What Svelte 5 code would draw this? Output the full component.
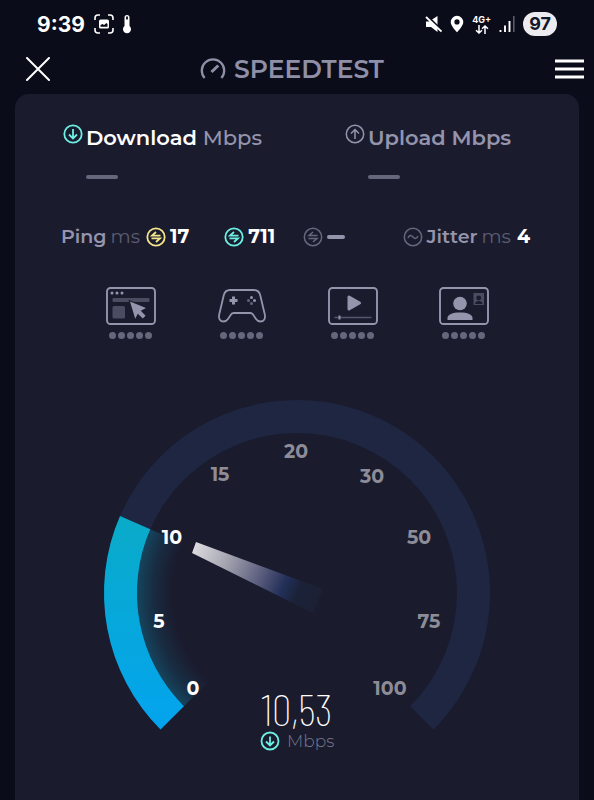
<script>
  const activities = ['Browsing', 'Gaming', 'Streaming', 'Video chat'];

  // offsets from the dial centre
  const marks = [
    { value: 0, x: -104, y: 95 },
    { value: 5, x: -138, y: 28 },
    { value: 10, x: -125, y: -56 },
    { value: 15, x: -77, y: -119 },
    { value: 20, x: -1, y: -142 },
    { value: 30, x: 75, y: -117 },
    { value: 50, x: 122, y: -56 },
    { value: 75, x: 132, y: 28 },
    { value: 100, x: 93, y: 95 }
  ];

  const START = 225;
  const END = 495;
  const NEEDLE = 293.5;

  let current = $state(10);

  function point(r, deg) {
    const a = ((deg - 90) * Math.PI) / 180;
    return `${(r * Math.cos(a)).toFixed(2)} ${(r * Math.sin(a)).toFixed(2)}`;
  }

  function band(outer, inner, from, to) {
    const large = to - from > 180 ? 1 : 0;
    return `M${point(outer, from)} A${outer} ${outer} 0 ${large} 1 ${point(outer, to)} L${point(inner, to)} A${inner} ${inner} 0 ${large} 0 ${point(inner, from)} Z`;
  }
</script>

{#snippet pingIcon(kind)}
  <svg class="round {kind}" viewBox="0 0 20 20" aria-hidden="true">
    <circle cx="10" cy="10" r="8.7" />
    <path d="M14.5 8.6H6L10 5M5.5 11.4H14L10 15" />
  </svg>
{/snippet}

<div class="page">
  <div class="status">
    <span class="clock">9:39</span>
    <svg width="20" height="20" viewBox="0 0 20 20" aria-hidden="true">
      <path d="M1 6V4a3 3 0 0 1 3-3h2M14 1h2a3 3 0 0 1 3 3v2M19 14v2a3 3 0 0 1-3 3h-2M6 19H4a3 3 0 0 1-3-3v-2" fill="none" stroke="#fff" stroke-width="1.6" />
      <rect x="5" y="5.5" width="10" height="9" rx="1.6" fill="#fff" />
      <path d="M6.5 12.8V11l2-1 1.6 1 2.4-2 1 1v2.8z" fill="#0a0c1a" />
    </svg>
    <svg width="8" height="20" viewBox="0 0 8 20" aria-hidden="true">
      <path d="M1.5 3.5a2.5 2.5 0 0 1 5 0v8.600a4 4 0 1 1-5 0z" fill="#fff" />
      <path d="M4 2.5v3" stroke="#0a0c1a" stroke-width="1.8" />
    </svg>
    <div class="right">
      <svg width="17" height="18" viewBox="0 0 17 18" aria-hidden="true">
        <path d="M1 6.5h3L12.5 1v16L6 12H1z" fill="#fff" />
        <path d="M1 .5l15.5 15" stroke="#0a0c1a" stroke-width="3" />
        <path d="M1 2l15.5 14.5" stroke="#fff" stroke-width="1.8" />
      </svg>
      <svg width="14" height="18" viewBox="0 0 14 18" aria-hidden="true">
        <path d="M7 .8A6.300 6.300 0 0 0 .7 7.100C.7 11.300 7 17.300 7 17.300s6.300-6 6.300-10.200A6.300 6.300 0 0 0 7 .8zM7 4.300a2.600 2.600 0 1 1 0 5.200 2.600 2.600 0 0 1 0-5.200z" fill="#fff" fill-rule="evenodd" />
      </svg>
      <span class="net">
        4G+
        <svg width="14" height="9" viewBox="0 0 14 9" aria-hidden="true">
          <path d="M4 0v8M1 5.200L4 8l3-2.800M10 9V1M7 3.800L10 1l3 2.800" fill="none" stroke="#fff" stroke-width="1.500" />
        </svg>
      </span>
      <svg width="16" height="16" viewBox="0 0 16 16" aria-hidden="true">
        <path d="M1.500 16v-2M6 16V9.500M10.500 16V5" stroke="#fff" stroke-width="1.900" />
        <path d="M14.800 16V0" stroke="#5b5c68" stroke-width="1.600" />
      </svg>
      <span class="battery">97</span>
    </div>
  </div>

  <header>
    <button class="close" aria-label="Close">
      <svg width="24" height="24" viewBox="0 0 24 24"><path d="M1 1l22 22M23 1L1 23" stroke="#fff" stroke-width="2" stroke-linecap="round" /></svg>
    </button>
    <h1>
      <svg width="26" height="24" viewBox="0 0 26 24" aria-hidden="true">
        <path d="M4.600 21A11.200 11.200 0 1 1 21.400 21" fill="none" stroke="#8f90a8" stroke-width="2.300" />
        <path d="M11.500 15L18.300 8.500" stroke="#8f90a8" stroke-width="3" />
      </svg>
      SPEEDTEST
    </h1>
    <button class="menu" aria-label="Menu">
      <svg width="29" height="20" viewBox="0 0 29 20"><path d="M0 2h29M0 10h29M0 18h29" stroke="#fff" stroke-width="3" /></svg>
    </button>
  </header>

  <main>
    <section class="results">
      <div class="result on">
        <svg class="round teal" viewBox="0 0 20 20" aria-hidden="true"><circle cx="10" cy="10" r="8.700" /><path d="M10 5v9M6 10.500l4 4 4-4" /></svg>
        <div>
          <h2>Download <span>Mbps</span></h2>
          <div class="dash"></div>
        </div>
      </div>
      <div class="result">
        <svg class="round soft" viewBox="0 0 20 20" aria-hidden="true"><circle cx="10" cy="10" r="8.700" /><path d="M10 15V6M6 9.500l4-4 4 4" /></svg>
        <div>
          <h2>Upload <span>Mbps</span></h2>
          <div class="dash"></div>
        </div>
      </div>
    </section>

    <section class="latency">
      <div><b>Ping</b> <span class="ms">ms</span> {@render pingIcon('yellow')} <strong>17</strong></div>
      <div>{@render pingIcon('teal')} <strong>711</strong></div>
      <div>{@render pingIcon('dim')} <i class="dash"></i></div>
      <div>
        <svg class="round dim" viewBox="0 0 20 20" aria-hidden="true"><circle cx="10" cy="10" r="8.700" /><path d="M5 11c1.500-3.200 3.200-3 5-1s3.500 2.200 5-1" /></svg>
        <b>Jitter</b> <span class="ms">ms</span> <strong class="last">4</strong>
      </div>
    </section>

    <section class="activities">
      {#each activities as name, i}
        <div class="activity">
          <svg width="50" height="38" viewBox="0 0 50 38" role="img" aria-label={name}>
            {#if i !== 1}
              <rect x="1" y="1" width="48" height="36" rx="3.500" fill="none" stroke="#9495ad" stroke-width="1.900" />
            {/if}
            {#if i === 0}
              <g fill="#9495ad"><circle cx="6" cy="6" r="1.500" /><circle cx="11" cy="6" r="1.500" /><circle cx="16" cy="6" r="1.500" /></g>
              <rect x="6.500" y="11" width="37" height="4" rx="1" fill="#4b4c62" />
              <rect x="6.500" y="19" width="12.500" height="12.500" rx="1.500" fill="#4b4c62" />
              <path d="M24 14.500l16 6.500-5.200 2.800 4.800 5-2.800 2.800-5-4.800-2.600 5z" fill="#9495ad" stroke="#1b1b2e" stroke-width="2" paint-order="stroke" />
            {:else if i === 1}
              <path d="M13 3h24c3.500 0 5.500 2 6.300 5.500l4.500 19c1 4.500-1.300 7-4.300 7-2 0-3.500-1-4.500-2.500l-3-4.500c-.8-1.200-1.500-1.500-2.800-1.500H16.800c-1.300 0-2 .3-2.800 1.500L11 32c-1 1.500-2.500 2.500-4.500 2.500-3 0-5.300-2.500-4.300-7l4.500-19C7.500 5 9.500 3 13 3z" fill="none" stroke="#9495ad" stroke-width="1.800" />
              <path d="M16.500 9.500v8M12.500 13.500h8" stroke="#9495ad" stroke-width="3" />
              <circle cx="34.500" cy="10.500" r="1.500" fill="#9495ad" /><circle cx="37.500" cy="13.500" r="1.500" fill="#9495ad" />
              <circle cx="31.500" cy="13.500" r="1.500" fill="#626378" /><circle cx="34.500" cy="16.500" r="1.500" fill="#626378" />
            {:else if i === 2}
              <path d="M21 10v12l10.500-6z" fill="#9495ad" stroke="#9495ad" stroke-width="3" stroke-linejoin="round" />
              <path d="M6.500 30.500h37" stroke="#55566c" stroke-width="1.600" />
              <path d="M11.500 28.500v4" stroke="#9495ad" stroke-width="2" />
            {:else}
              <circle cx="21" cy="16.500" r="6.800" fill="#9495ad" />
              <path d="M8.500 33v-2c0-3.500 5-5.500 12.500-5.500S33.500 27.500 33.500 31v2z" fill="#9495ad" />
              <rect x="34.500" y="6" width="10.500" height="12" fill="#4b4c62" />
              <circle cx="39.700" cy="11" r="2.400" fill="#1b1b2e" />
              <path d="M36 17c0-4 7.500-4 7.500 0z" fill="#1b1b2e" />
            {/if}
          </svg>
          <div class="dots">
            {#each Array(5) as _}<i></i>{/each}
          </div>
        </div>
      {/each}
    </section>

    <svg class="gauge" viewBox="-282 -213 564 400" role="img" aria-label="Download speed 10,53 Mbps">
      <defs>
        <linearGradient id="fill" x1="0" y1="-77" x2="0" y2="136" gradientUnits="userSpaceOnUse">
          <stop offset="0" stop-color="#0aabc8" />
          <stop offset="1" stop-color="#03a4ee" />
        </linearGradient>
        <radialGradient id="glow" cx="0" cy="0" r="160" gradientUnits="userSpaceOnUse">
          <stop offset="0.780" stop-color="#10607c" stop-opacity="0" />
          <stop offset="0.900" stop-color="#10607c" stop-opacity="0.250" />
          <stop offset="1" stop-color="#10607c" stop-opacity="0.600" />
        </radialGradient>
        <linearGradient id="needle" x1="-103" y1="-45" x2="21" y2="8" gradientUnits="userSpaceOnUse">
          <stop offset="0" stop-color="#dcdbdf" />
          <stop offset="0.250" stop-color="#a7a7b2" />
          <stop offset="0.550" stop-color="#56597a" />
          <stop offset="0.720" stop-color="#222f58" />
          <stop offset="0.840" stop-color="#1b2238" />
          <stop offset="1" stop-color="#1c2035" />
        </linearGradient>
      </defs>
      <path d={band(193, 160, START, END)} fill="#1e2642" />
      <path d={band(160, 124, START, NEEDLE)} fill="url(#glow)" />
      <path d={band(193, 160, START, NEEDLE)} fill="url(#fill)" />
      <path d="M-101-51L-105-40 16 20 26-4z" fill="url(#needle)" />
      {#each marks as m}
        <text class="mark" class:lit={m.value <= current} x={m.x} y={m.y + 7}>{m.value}</text>
      {/each}
      <text class="speed" x="0" y="133">10,53</text>
      <g transform="translate(-27 148)" fill="none" stroke="#6cf0e4" stroke-width="1.800">
        <circle r="8.500" /><path d="M0-4.500v8.500M-4 .5l4 4 4-4" />
      </g>
      <text class="unit" x="-10" y="154">Mbps</text>
    </svg>
  </main>
</div>

<style>
  :global(body) {
    margin: 0;
    background: #0a0c1a;
  }
  .page {
    min-height: 100vh;
    display: flex;
    flex-direction: column;
    font-family: Montserrat, Inter, sans-serif;
    color: #fff;
  }
  .status {
    display: flex;
    align-items: center;
    gap: 9px;
    height: 48px;
    padding: 0 37px;
    font-family: Inter, sans-serif;
  }
  .clock {
    font-size: 21px;
    font-weight: 700;
  }
  .right {
    display: flex;
    align-items: center;
    gap: 8px;
    margin-left: auto;
  }
  .net {
    display: flex;
    flex-direction: column;
    align-items: center;
    font-size: 9px;
    line-height: 10px;
    font-weight: 700;
  }
  .battery {
    padding: 0 6px;
    border-radius: 12px;
    background: #ececf0;
    color: #14162a;
    font-size: 18px;
    line-height: 24px;
    font-weight: 700;
  }
  header {
    display: grid;
    grid-template-columns: 1fr auto 1fr;
    align-items: center;
    height: 42px;
    padding: 0 10px 4px 0;
  }
  button {
    display: flex;
    padding: 0;
    border: 0;
    background: none;
  }
  .close {
    justify-self: start;
    margin-left: 26px;
  }
  .menu {
    justify-self: end;
  }
  h1 {
    display: flex;
    align-items: center;
    gap: 8px;
    margin: 0;
    font-size: 25px;
    font-weight: 600;
    color: #8f90a8;
  }
  main {
    flex: 1;
    margin: 0 15px;
    border-radius: 14px 14px 0 0;
    background: #1b1b2e;
  }
  .results {
    display: grid;
    grid-template-columns: 1fr 1fr;
    padding-top: 30px;
  }
  .result {
    display: flex;
    gap: 3px;
    padding-left: 48px;
    color: #9495ad;
  }
  .round {
    flex: none;
    width: 20px;
    height: 20px;
    fill: none;
    stroke: currentColor;
    stroke-width: 1.8;
  }
  .teal {
    color: #6cf0e4;
  }
  .yellow {
    color: #f3e58a;
  }
  .soft {
    color: #9495ad;
    stroke-width: 1.5;
  }
  .dim {
    color: #66677c;
    stroke-width: 1.5;
  }
  h2 {
    margin: 0;
    font-size: 21px;
    line-height: 28px;
    font-weight: 600;
    color: #9495ad;
  }
  .on h2 {
    color: #fff;
  }
  .on h2 span {
    color: #9495ad;
    font-weight: 500;
  }
  .dash {
    width: 32px;
    height: 4px;
    border-radius: 2px;
    background: #66677c;
  }
  .result .dash {
    margin-top: 23px;
  }
  .latency {
    display: grid;
    grid-template-columns: 164fr 79fr 100fr 125fr;
    margin-top: 46px;
    padding: 0 49px 0 46px;
    font-size: 19px;
    line-height: 24px;
    color: #9495ad;
  }
  .latency div {
    display: flex;
    align-items: center;
    gap: 4px;
    white-space: nowrap;
  }
  .latency b {
    font-weight: 600;
  }
  .latency .dash {
    width: 18px;
    background: #9495ad;
  }
  .latency strong {
    font-weight: 700;
    color: #fff;
  }
  .latency .last {
    margin-left: auto;
  }
  .ms {
    margin-right: 2px;
    color: #5c5d72;
  }
  .activities {
    display: grid;
    grid-template-columns: repeat(4, 1fr);
    margin-top: 38px;
    padding: 0 60px;
  }
  .activity {
    display: flex;
    flex-direction: column;
    align-items: center;
    gap: 7px;
  }
  .dots {
    display: flex;
    gap: 2px;
  }
  .dots i {
    width: 7px;
    height: 7px;
    border-radius: 50%;
    background: #66677c;
  }
  .gauge {
    display: block;
    width: 100%;
    margin-top: 41px;
  }
  .mark {
    font-size: 19px;
    font-weight: 700;
    text-anchor: middle;
    fill: #8d8d98;
  }
  .lit {
    fill: #fff;
  }
  .speed {
    font-family: "Barlow Condensed", "Roboto Condensed", Roboto, sans-serif;
    font-size: 44px;
    font-weight: 200;
    text-anchor: middle;
    fill: #fff;
  }
  .unit {
    font-size: 17px;
    font-weight: 300;
    fill: #77788c;
  }
</style>
